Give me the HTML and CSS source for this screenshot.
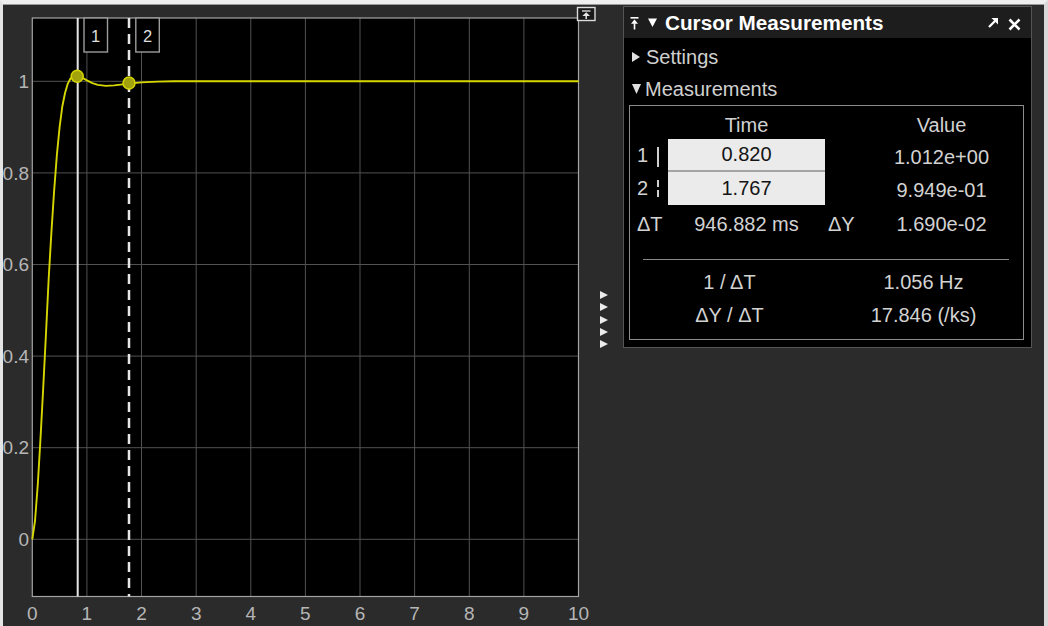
FILE: index.html
```html
<!DOCTYPE html>
<html lang="en">
<head>
<meta charset="utf-8">
<title>Cursor Measurements</title>
<link rel="stylesheet" href="styles.css">
</head>
<body>
<div class="app">
  <div class="plot">
    <svg class="plot-svg" width="594" height="621" viewBox="3 5 594 621" xmlns="http://www.w3.org/2000/svg">
      <rect x="32.3" y="18" width="546.2" height="578.5" fill="#000"/>
      <g stroke="#525252" stroke-width="1">
        <line x1="86.9" y1="18" x2="86.9" y2="596.5"/>
        <line x1="141.5" y1="18" x2="141.5" y2="596.5"/>
        <line x1="196.2" y1="18" x2="196.2" y2="596.5"/>
        <line x1="250.8" y1="18" x2="250.8" y2="596.5"/>
        <line x1="305.4" y1="18" x2="305.4" y2="596.5"/>
        <line x1="360" y1="18" x2="360" y2="596.5"/>
        <line x1="414.6" y1="18" x2="414.6" y2="596.5"/>
        <line x1="469.3" y1="18" x2="469.3" y2="596.5"/>
        <line x1="523.9" y1="18" x2="523.9" y2="596.5"/>
        <line x1="32.3" y1="539.3" x2="578.5" y2="539.3"/>
        <line x1="32.3" y1="447.7" x2="578.5" y2="447.7"/>
        <line x1="32.3" y1="356.1" x2="578.5" y2="356.1"/>
        <line x1="32.3" y1="264.5" x2="578.5" y2="264.5"/>
        <line x1="32.3" y1="172.9" x2="578.5" y2="172.9"/>
        <line x1="32.3" y1="81.3" x2="578.5" y2="81.3"/>
      </g>
      <rect x="32.3" y="18" width="546.2" height="578.5" fill="none" stroke="#a4a4a4" stroke-width="1.2"/>
      <polyline fill="none" stroke="#d6d600" stroke-width="1.9" stroke-linejoin="round"
        points="32.3,539.3 35,521 37.8,484.3 40.5,438.5 43.2,388.2 46,333.2 48.7,278.2 51.4,232.4 54.1,191.2 56.9,154.6 59.6,127.1 62.3,106.5 65.1,92.7 67.8,83.6 70.5,78.5 73.3,76.3 77.2,75.8 81.5,77.2 86.9,80.4 92.4,83.1 97.8,84.9 106,85.9 114.2,85.4 129,83.6 141.5,82.4 157.9,81.6 174.3,81.3 578.5,81.3"/>
      <line x1="77.7" y1="18" x2="77.7" y2="596.5" stroke="#e6e6e6" stroke-width="2"/>
      <line x1="129" y1="18" x2="129" y2="596.5" stroke="#e6e6e6" stroke-width="2.5" stroke-dasharray="10 6"/>
      <rect x="84" y="18" width="23.5" height="34" fill="#000" stroke="#9c9c9c" stroke-width="1.4"/>
      <rect x="135.8" y="18" width="23.5" height="34" fill="#000" stroke="#9c9c9c" stroke-width="1.4"/>
      <text class="cur-num" x="95.7" y="41.8">1</text>
      <text class="cur-num" x="147.5" y="41.8">2</text>
      <circle cx="77.2" cy="76.2" r="6" fill="#a2a20c" stroke="#d4d400" stroke-width="1.5"/>
      <circle cx="129" cy="83" r="6" fill="#a2a20c" stroke="#d4d400" stroke-width="1.5"/>
      <g class="ytick">
        <text x="29" y="88">1</text>
        <text x="29" y="179.6">0.8</text>
        <text x="29" y="271.2">0.6</text>
        <text x="29" y="362.8">0.4</text>
        <text x="29" y="454.4">0.2</text>
        <text x="29" y="546">0</text>
      </g>
      <g class="xtick">
        <text x="32.3" y="619.8">0</text>
        <text x="86.9" y="619.8">1</text>
        <text x="141.5" y="619.8">2</text>
        <text x="196.2" y="619.8">3</text>
        <text x="250.8" y="619.8">4</text>
        <text x="305.4" y="619.8">5</text>
        <text x="360" y="619.8">6</text>
        <text x="414.6" y="619.8">7</text>
        <text x="469.3" y="619.8">8</text>
        <text x="523.9" y="619.8">9</text>
        <text x="578.5" y="619.8">10</text>
      </g>
      <rect x="577.5" y="7.5" width="17.5" height="13" fill="#1a1a1a" stroke="#dcdcdc" stroke-width="1.4"/>
      <line x1="582" y1="11" x2="590.5" y2="11" stroke="#e6e6e6" stroke-width="1.3"/>
      <path d="M586.2 12.3 L590 16 L582.4 16 Z" fill="#e6e6e6"/>
      <line x1="586.2" y1="15.5" x2="586.2" y2="19" stroke="#e6e6e6" stroke-width="1.5"/>
    </svg>
  </div>

  <div class="handle">
    <svg class="handle-tri" width="8" height="8" viewBox="0 0 8 8"><path d="M0 0 L8 4 L0 8 Z"/></svg>
    <svg class="handle-tri" width="8" height="8" viewBox="0 0 8 8"><path d="M0 0 L8 4 L0 8 Z"/></svg>
    <svg class="handle-tri" width="8" height="8" viewBox="0 0 8 8"><path d="M0 0 L8 4 L0 8 Z"/></svg>
    <svg class="handle-tri" width="8" height="8" viewBox="0 0 8 8"><path d="M0 0 L8 4 L0 8 Z"/></svg>
    <svg class="handle-tri" width="8" height="8" viewBox="0 0 8 8"><path d="M0 0 L8 4 L0 8 Z"/></svg>
  </div>

  <div class="panel-col">
    <section class="panel">
      <header class="panel-head">
        <svg class="pin" width="9" height="13" viewBox="0 0 9 13"><rect x="0.5" y="0" width="8" height="1.6" fill="#fff"/><path d="M4.5 2.6 L8 6.8 L1 6.8 Z" fill="#fff"/><rect x="3.7" y="6.3" width="1.6" height="6.2" fill="#fff"/></svg>
        <svg class="collapse" width="9" height="9" viewBox="0 0 9 9"><path d="M0 0.5 H9 L4.5 9 Z" fill="#fff"/></svg>
        <span class="title">Cursor Measurements</span>
        <span class="head-icons">
          <svg width="10" height="10" viewBox="0 0 10 10"><path d="M10 0 L10 6.5 L3.5 0 Z" fill="#fff"/><line x1="1" y1="9" x2="7" y2="3" stroke="#fff" stroke-width="2.3"/></svg>
          <svg class="close" width="13" height="13" viewBox="0 0 13 13"><path d="M1.5 1.5 L11.5 11.5 M11.5 1.5 L1.5 11.5" stroke="#fff" stroke-width="2.6"/></svg>
        </span>
      </header>
      <div class="panel-body">
        <div class="section-row">
          <svg class="sec-tri" width="8" height="10" viewBox="0 0 8 10"><path d="M0 0 L8 5 L0 10 Z"/></svg>
          <span class="sec-label settings">Settings</span>
        </div>
        <div class="section-row">
          <svg class="sec-tri" width="9" height="10" viewBox="0 0 9 10"><path d="M0 0 H9 L4.5 10 Z"/></svg>
          <span class="sec-label meas">Measurements</span>
        </div>
        <div class="meas-box">
          <div class="meas-grid">
            <div class="cell head c2">Time</div>
            <div class="cell head c4">Value</div>

            <div class="cell label"><span>1</span><span class="bar solid"></span></div>
            <div class="cell input first">0.820</div>
            <div class="cell"></div>
            <div class="cell val low">1.012e+00</div>

            <div class="cell label"><span>2</span><span class="bar dashed"></span></div>
            <div class="cell input">1.767</div>
            <div class="cell"></div>
            <div class="cell val low">9.949e-01</div>

            <div class="cell label">ΔT</div>
            <div class="cell val">946.882 ms</div>
            <div class="cell dy">ΔY</div>
            <div class="cell val">1.690e-02</div>
          </div>
          <div class="sep"></div>
          <div class="rate-grid">
            <div class="cell val">1 / ΔT</div>
            <div class="cell val r">1.056 Hz</div>
            <div class="cell val">ΔY / ΔT</div>
            <div class="cell val r">17.846 (/ks)</div>
          </div>
        </div>
      </div>
    </section>
  </div>
</div>
</body>
</html>
```

FILE: styles.css
```css
html, body {
  margin: 0;
  padding: 0;
}

body {
  width: 1048px;
  height: 626px;
  box-sizing: border-box;
  overflow: hidden;
  background: #2b2b2b;
  border-top: 4px solid #efefef;
  border-left: 3px solid #e4e4e4;
  border-right: 4px solid #d8d8d8;
  font-family: "Liberation Sans", Arial, sans-serif;
  color: #d2d2d2;
}

.app {
  display: flex;
  height: 622px;
  border-top: 1px solid #9a9a9a;
  box-sizing: border-box;
}

.plot {
  width: 594px;
  flex: none;
}

.plot-svg {
  display: block;
}

.cur-num {
  font-family: "Liberation Sans", Arial, sans-serif;
  font-size: 16.5px;
  fill: #dedede;
  text-anchor: middle;
}

.ytick text {
  font-family: "Liberation Sans", Arial, sans-serif;
  font-size: 19px;
  fill: #b6b6b6;
  text-anchor: end;
}

.xtick text {
  font-family: "Liberation Sans", Arial, sans-serif;
  font-size: 19px;
  fill: #b6b6b6;
  text-anchor: middle;
}

.handle {
  width: 26px;
  flex: none;
  box-sizing: border-box;
  padding-top: 286px;
  padding-left: 3px;
  display: flex;
  flex-direction: column;
  gap: 4.3px;
}

.handle-tri {
  display: block;
  fill: #ececec;
}

.panel-col {
  flex: 1;
  padding-top: 1px;
}

.panel {
  width: 409px;
  height: 342px;
  box-sizing: border-box;
  border: 1px solid #555;
  background: #000;
  display: flex;
  flex-direction: column;
}

.panel-head {
  height: 31px;
  flex: none;
  background: #1d1d1d;
  display: flex;
  align-items: center;
  padding-left: 6px;
  padding-right: 10px;
}

.pin {
  display: block;
  margin-top: 1px;
}

.collapse {
  display: block;
  margin-left: 9px;
}

.title {
  margin-left: 8px;
  font-size: 20.7px;
  font-weight: bold;
  color: #ffffff;
  white-space: nowrap;
}

.head-icons {
  margin-left: auto;
  display: flex;
  align-items: center;
  gap: 10px;
}

.head-icons svg {
  display: block;
}

.close {
  margin-top: 3px;
}

.panel-body {
  flex: 1;
  padding: 3px 7px 7px 5px;
  display: flex;
  flex-direction: column;
}

.section-row {
  height: 32px;
  display: flex;
  align-items: center;
  padding-left: 3px;
  font-size: 20px;
  color: #d0d0d0;
}

.sec-tri {
  display: block;
  fill: #e0e0e0;
}

.settings {
  margin-left: 6px;
}

.meas {
  margin-left: 4px;
}

.meas-box {
  border: 1px solid #8c8c8c;
  padding: 6px 0 7px;
  font-size: 20px;
  color: #d2d2d2;
}

.meas-grid {
  display: grid;
  grid-template-columns: 38px 157px 35px 1fr;
  grid-template-rows: 27px 33px 33px 38px;
}

.cell {
  display: flex;
  align-items: center;
  white-space: nowrap;
}

.head {
  justify-content: center;
}

.c2 {
  grid-column: 2;
}

.c4 {
  grid-column: 4;
}

.label {
  padding-left: 7px;
}

.bar {
  display: block;
  width: 2px;
  height: 20px;
  margin-left: 9px;
  margin-top: 2px;
}

.bar.solid {
  background: #cfcfcf;
}

.bar.dashed {
  background: repeating-linear-gradient(to bottom, #cfcfcf 0 7px, transparent 7px 10px);
}

.input {
  justify-content: center;
  background: #ebebeb;
  color: #141414;
}

.input.first {
  border-bottom: 2px solid #a4a4a4;
}

.val {
  justify-content: center;
}

.low {
  padding-top: 4px;
}

.dy {
  padding-left: 3px;
}

.sep {
  height: 1px;
  background: #8a8a8a;
  margin: 16px 14px 6px 13px;
}

.rate-grid {
  display: grid;
  grid-template-columns: 199px 1fr;
  grid-template-rows: 33px 33px;
}

.rate-grid .r {
  padding-right: 5px;
}
```
